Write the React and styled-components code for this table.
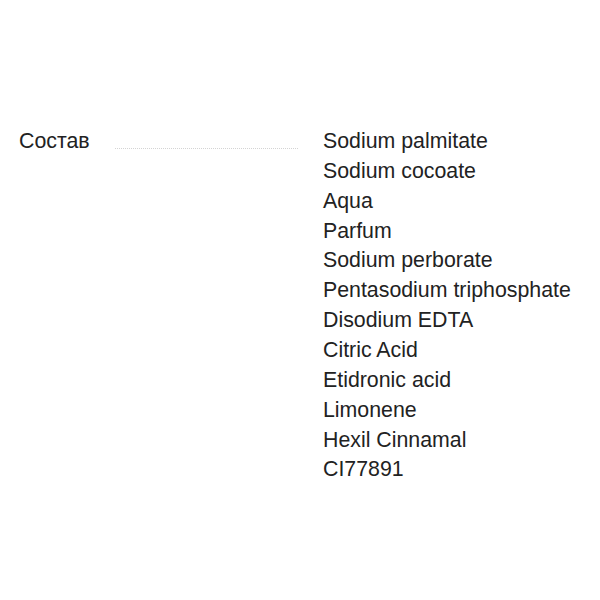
import React from "react";
import styled, { createGlobalStyle } from "styled-components";

const Global = createGlobalStyle`
  html, body { margin: 0; padding: 0; background: #fff; }
  body { font-family: "Liberation Sans", Arial, sans-serif; color: #222; }
`;

const Page = styled.div`
  width: 600px;
  height: 600px;
  box-sizing: border-box;
  padding: 127px 0 0 19px;
`;

const Row = styled.div`
  display: flex;
  align-items: flex-start;
`;

const Label = styled.div`
  width: 96px;
  font-size: 21.33px;
  line-height: 1.4;
  color: #222;
`;

const Dots = styled.div`
  width: 183px;
  height: 21px;
  border-bottom: 1px dotted #d4d4d4;
  flex-shrink: 0;
`;

const Values = styled.ul`
  list-style: none;
  margin: 0 0 0 25px;
  padding: 0;
`;

const Item = styled.li`
  font-size: 21.33px;
  line-height: 1.4;
  color: #222;
  white-space: nowrap;
`;

const items = [
  "Sodium palmitate",
  "Sodium cocoate",
  "Aqua",
  "Parfum",
  "Sodium perborate",
  "Pentasodium triphosphate",
  "Disodium EDTA",
  "Citric Acid",
  "Etidronic acid",
  "Limonene",
  "Hexil Cinnamal",
  "CI77891",
];

export default function App() {
  return (
    <>
      <Global />
      <Page>
        <Row>
          <Label>Состав</Label>
          <Dots />
          <Values>
            {items.map((t) => (
              <Item key={t}>{t}</Item>
            ))}
          </Values>
        </Row>
      </Page>
    </>
  );
}
